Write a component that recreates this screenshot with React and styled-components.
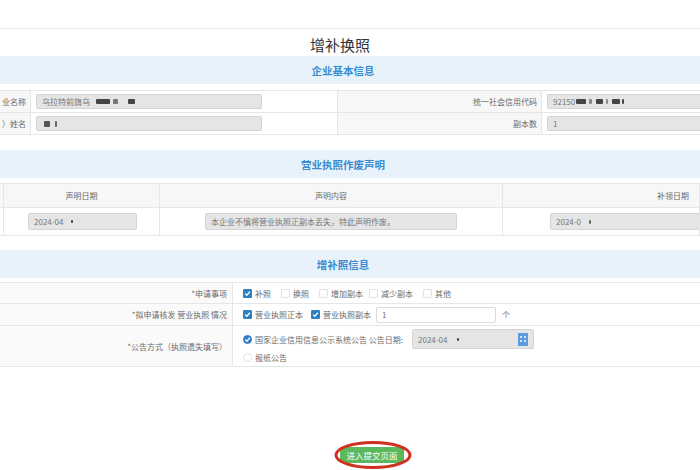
import React from "react";
import styled, { createGlobalStyle } from "styled-components";

const Global = createGlobalStyle`
  html, body { margin: 0; padding: 0; background: #fff; }
  body {
    width: 700px; height: 470px; overflow: hidden;
    font-family: "Noto Sans CJK SC", "Noto Sans", sans-serif;
    color: #666;
  }
`;

const Page = styled.div`
  width: 700px;
  display: flex;
  flex-direction: column;
`;

const TopBar = styled.div`
  height: 28px;
  border-bottom: 1px solid #eee;
`;

const Title = styled.h1`
  margin: 0;
  height: 27px;
  display: flex;
  align-items: center;
  justify-content: center;
  padding-right: 20px;
  padding-top: 3px;
  box-sizing: border-box;
  font-size: 15px;
  font-weight: 400;
  color: #333;
`;

const SectionHead = styled.div`
  height: 28px;
  margin-top: ${(p) => p.$mt || 0}px;
  background: #e8f2fb;
  display: flex;
  align-items: center;
  justify-content: center;
  padding-right: 14px;
  font-size: 10.5px;
  font-weight: 700;
  color: #3b8bd0;
`;

const InfoTable = styled.div`
  margin-top: 6px;
  border-top: 1px solid #e6e6e6;
`;

const InfoRow = styled.div`
  display: grid;
  grid-template-columns: 31px 306px 205px 1fr;
  height: 21px;
  border-bottom: 1px solid #e6e6e6;
`;

const Label = styled.div`
  display: flex;
  align-items: center;
  justify-content: flex-end;
  white-space: nowrap;
  overflow: hidden;
  padding-right: 4px;
  font-size: 8px;
  color: #6a6a6a;
  background: #f7f7f7;
  border-right: 1px solid #e6e6e6;
  border-left: ${(p) => (p.$bl ? "1px solid #e6e6e6" : "none")};
`;

const Value = styled.div`
  display: flex;
  align-items: center;
  padding-left: 5px;
  white-space: nowrap;
  overflow: hidden;
`;

const Field = styled.div`
  box-sizing: border-box;
  width: ${(p) => p.$w}px;
  flex: none;
  height: ${(p) => p.$h || 15}px;
  background: ${(p) => (p.$white ? "#fff" : "#e5e5e5")};
  border: 1px solid ${(p) => (p.$white ? "#dcdcdc" : "#d4d4d4")};
  border-radius: 2px;
  display: flex;
  align-items: center;
  padding-left: 5px;
  font-size: 8px;
  color: #777;
  white-space: nowrap;
  overflow: hidden;
  position: relative;
  margin-left: ${(p) => p.$ml || 0}px;
`;

const Smudge = styled.span`
  display: inline-block;
  width: ${(p) => p.$w}px;
  height: ${(p) => p.$h || 5}px;
  margin-left: ${(p) => p.$ml || 2}px;
  background: ${(p) => p.$c || "#444"};
  filter: blur(0.6px);
  border-radius: 1px;
`;

const DeclTable = styled.div`
  margin-top: 5px;
  border-top: 1px solid #e6e6e6;
`;

const DeclRow = styled.div`
  display: grid;
  grid-template-columns: 4px 156px 343px 1fr;
  height: ${(p) => p.$h}px;
  background: ${(p) => p.$bg || "#fff"};
  border-bottom: 1px solid #e6e6e6;
`;

const DeclCell = styled.div`
  display: flex;
  align-items: center;
  justify-content: ${(p) => p.$justify || "center"};
  padding-right: ${(p) => p.$pr || 0}px;
  border-right: 1px solid #e6e6e6;
  font-size: 8px;
  color: #6a6a6a;
  white-space: nowrap;
  overflow: hidden;
`;

const FormTable = styled.div`
  margin-top: 4px;
  border-top: 1px solid #e6e6e6;
`;

const FormRow = styled.div`
  display: grid;
  grid-template-columns: 233px 1fr;
  min-height: ${(p) => p.$h}px;
  border-bottom: 1px solid #e6e6e6;
`;

const FormLabel = styled.div`
  display: flex;
  align-items: center;
  justify-content: flex-end;
  padding-right: 5px;
  font-size: 8px;
  color: #6a6a6a;
  background: #fafafa;
  border-right: 1px solid #e6e6e6;
  white-space: nowrap;
`;

const Options = styled.div`
  display: flex;
  flex-direction: ${(p) => (p.$col ? "column" : "row")};
  justify-content: ${(p) => (p.$col ? "center" : "flex-start")};
  align-items: ${(p) => (p.$col ? "flex-start" : "center")};
  gap: ${(p) => (p.$col ? 3 : 0)}px;
  padding-left: 10px;
  font-size: 8px;
  color: #6a6a6a;
  white-space: nowrap;
`;

const Opt = styled.label`
  display: flex;
  align-items: center;
  gap: 3px;
  margin-right: ${(p) => p.$mr ?? 10}px;
`;

const Box = styled.span`
  box-sizing: border-box;
  width: 9px;
  height: 9px;
  border-radius: ${(p) => (p.$round ? "50%" : "1px")};
  background: ${(p) => (p.$on ? "#2f7fc3" : "#fff")};
  border: 1px solid ${(p) => (p.$on ? "#2f7fc3" : "#e2e2e2")};
  display: inline-flex;
  align-items: center;
  justify-content: center;
`;

const Check = ({ on, round }) => (
  <Box $on={on} $round={round}>
    {on && (
      <svg width="7" height="7" viewBox="0 0 8 8">
        <path d="M1.3 4.2 L3.2 6 L6.7 2" stroke="#fff" strokeWidth="1.4" fill="none" />
      </svg>
    )}
  </Box>
);

const Inline = styled.div`
  display: flex;
  align-items: center;
  gap: ${(p) => p.$gap ?? 6}px;
`;

const CalIcon = styled.span`
  position: absolute;
  right: 5px;
  top: 3px;
  display: flex;
`;

const Footer = styled.div`
  margin-top: 80px;
  display: flex;
  padding-left: 340px;
`;

const BtnWrap = styled.div`
  position: relative;
`;

const Button = styled.button`
  width: 64px;
  height: 16px;
  border: none;
  border-radius: 2px;
  background: #5cb85c;
  color: #fff;
  font-family: inherit;
  font-size: 8.5px;
  padding: 0;
  display: flex;
  align-items: center;
  justify-content: center;
`;

const Ring = styled.svg`
  position: absolute;
  left: -6px;
  top: -7px;
  pointer-events: none;
`;

export default function App() {
  return (
    <Page>
      <Global />
      <TopBar />
      <Title>增补换照</Title>
      <SectionHead>企业基本信息</SectionHead>
      <InfoTable>
        <InfoRow>
          <Label>业名称</Label>
          <Value>
            <Field $w={226}>
              乌拉特前旗乌
              <Smudge $w={14} $ml={6} />
              <Smudge $w={5} $ml={3} $c="#777" />
              <Smudge $w={7} $ml={10} />
            </Field>
          </Value>
          <Label $bl>统一社会信用代码</Label>
          <Value>
            <Field $w={170}>
              92150
              <Smudge $w={10} $ml={1} />
              <Smudge $w={3} $ml={3} $c="#888" />
              <Smudge $w={7} $ml={4} />
              <Smudge $w={2} $ml={3} $c="#888" />
              <Smudge $w={8} $ml={4} />
              <Smudge $w={2} $ml={2} />
            </Field>
          </Value>
        </InfoRow>
        <InfoRow>
          <Label>）姓名</Label>
          <Value>
            <Field $w={226}>
              <Smudge $w={6} $h={6} $ml={0} $c="#555" />
              <Smudge $w={2} $h={6} $ml={5} $c="#666" />
            </Field>
          </Value>
          <Label $bl>副本数</Label>
          <Value>
            <Field $w={170}>1</Field>
          </Value>
        </InfoRow>
      </InfoTable>

      <SectionHead $mt={15}>营业执照作废声明</SectionHead>
      <DeclTable>
        <DeclRow $h={23} $bg="#f7f7f7">
          <DeclCell />
          <DeclCell>声明日期</DeclCell>
          <DeclCell>声明内容</DeclCell>
          <DeclCell $justify="flex-end" $pr={10}>补领日期</DeclCell>
        </DeclRow>
        <DeclRow $h={27}>
          <DeclCell />
          <DeclCell>
            <Field $w={109} $h={17} $ml={2}>
              2024-04
              <Smudge $w={2} $h={3} $ml={8} />
            </Field>
          </DeclCell>
          <DeclCell>
            <Field $w={252} $h={17}>本企业不慎将营业执照正副本丢失，特此声明作废。</Field>
          </DeclCell>
          <DeclCell $justify="flex-start">
            <Field $w={200} $h={17} $ml={47}>
              2024-0
              <Smudge $w={2} $h={4} $ml={8} $c="#666" />
            </Field>
          </DeclCell>
        </DeclRow>
      </DeclTable>

      <SectionHead $mt={14}>增补照信息</SectionHead>
      <FormTable>
        <FormRow $h={20}>
          <FormLabel>*申请事项</FormLabel>
          <Options>
            <Opt><Check on />补照</Opt>
            <Opt><Check />换照</Opt>
            <Opt $mr={6}><Check />增加副本</Opt>
            <Opt><Check />减少副本</Opt>
            <Opt><Check />其他</Opt>
          </Options>
        </FormRow>
        <FormRow $h={21}>
          <FormLabel>*拟申请核发 营业执照 情况</FormLabel>
          <Options>
            <Opt $mr={8}><Check on />营业执照正本</Opt>
            <Opt $mr={5}><Check on />营业执照副本</Opt>
            <Inline>
              <Field $w={120} $h={16} $white>1</Field>
              个
            </Inline>
          </Options>
        </FormRow>
        <FormRow $h={40}>
          <FormLabel>*公告方式（执照遗失填写）</FormLabel>
          <Options $col>
            <Inline $gap={9}>
              <Opt $mr={0}><Check on round />国家企业信用信息公示系统公告 公告日期:</Opt>
              <Field $w={122} $h={20}>
                2024-04
                <Smudge $w={2} $h={3} $ml={10} />
                <CalIcon>
                  <svg width="10" height="13" viewBox="0 0 10 13">
                    <rect x="0" y="0" width="10" height="13" fill="#5b9bde" />
                    <rect x="2" y="3" width="2" height="2" fill="#cfe2f7" />
                    <rect x="6" y="3" width="2" height="2" fill="#cfe2f7" />
                    <rect x="2" y="7" width="2" height="2" fill="#cfe2f7" />
                    <rect x="6" y="7" width="2" height="2" fill="#cfe2f7" />
                  </svg>
                </CalIcon>
              </Field>
            </Inline>
            <Opt><Check round />报纸公告</Opt>
          </Options>
        </FormRow>
      </FormTable>

      <Footer>
        <BtnWrap>
          <Button>进入提交页面</Button>
          <Ring width="78" height="30" viewBox="0 0 78 30">
            <ellipse cx="39" cy="15" rx="37" ry="12.5" fill="none" stroke="#d0301f" strokeWidth="3" />
          </Ring>
        </BtnWrap>
      </Footer>
    </Page>
  );
}
